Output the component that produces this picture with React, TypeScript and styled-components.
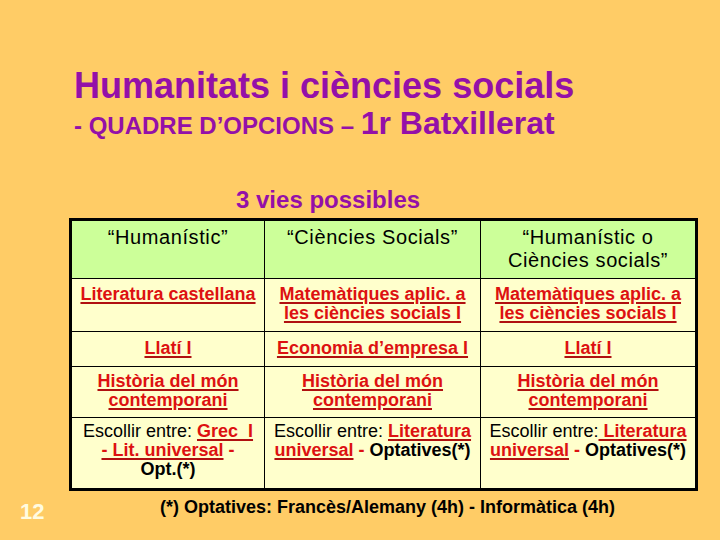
import React from "react";
import styled, { createGlobalStyle } from "styled-components";

const Global = createGlobalStyle`
  html, body { margin: 0; padding: 0; }
  body { background: #ffcc66; font-family: "Liberation Sans", Arial, sans-serif; }
`;

const Page = styled.div`
  width: 720px;
  height: 540px;
  background: #ffcc66;
  display: flex;
  flex-direction: column;
  box-sizing: border-box;
  padding-top: 66px;
  overflow: hidden;
`;

const TitleBlock = styled.div`
  padding-left: 74px;
  color: #9410a8;
  font-weight: bold;
`;

const Title = styled.div`
  font-size: 36px;
  line-height: 40px;
`;

const Subtitle = styled.div`
  line-height: 34px;
`;

const Small = styled.span`
  font-size: 24px;
`;

const Big = styled.span`
  font-size: 32px;
`;

const Ways = styled.div`
  color: #9410a8;
  font-weight: bold;
  font-size: 24px;
  line-height: 28px;
  padding-left: 236px;
  margin-top: 40px;
`;

const Table = styled.table`
  margin-left: 69px;
  margin-top: 4px;
  width: 626px;
  border-collapse: collapse;
  border: 3px solid #000;
  table-layout: fixed;
`;

const Head = styled.td`
  background: #ccff99;
  border: 1px solid #000;
  font-size: 20px;
  letter-spacing: 0.6px;
  line-height: 23px;
  text-align: center;
  vertical-align: top;
  height: 59px;
  padding: 5px 2px 0;
  box-sizing: border-box;
  color: #000;
`;

const Cell = styled.td<{ $h: number; $pt?: number }>`
  background: #ffffcc;
  border: 1px solid #000;
  font-size: 18px;
  line-height: 19px;
  text-align: center;
  vertical-align: top;
  height: ${(p) => p.$h}px;
  padding: ${(p) => p.$pt ?? 6}px 2px 0;
  box-sizing: border-box;
  color: #000;
`;

const Subject = styled.span`
  color: #dd1111;
  font-weight: bold;
  text-decoration: underline;
  text-decoration-thickness: 2px;
  text-underline-offset: 2px;
  text-decoration-color: #b01010;
`;

const Plain = styled.span`
  font-weight: normal;
`;

const Bold = styled.span`
  font-weight: bold;
`;

const Dash = styled.span`
  color: #dd1111;
  font-weight: bold;
`;

const Footer = styled.div`
  display: flex;
  align-items: flex-start;
`;

const PageNum = styled.div`
  width: 40px;
  padding-left: 20px;
  padding-top: 8px;
  font-size: 22px;
  line-height: 26px;
  font-weight: bold;
  color: #fffbe0;
`;

const Note = styled.div`
  padding-left: 100px;
  padding-top: 5px;
  font-size: 18px;
  font-weight: bold;
  color: #000;
  line-height: 22px;
`;

export default function App() {
  return (
    <>
      <Global />
      <Page>
        <TitleBlock>
          <Title>Humanitats i ciències socials</Title>
          <Subtitle>
            <Small>- QUADRE D’OPCIONS – </Small>
            <Big>1r Batxillerat</Big>
          </Subtitle>
        </TitleBlock>
        <Ways>3 vies possibles</Ways>
        <Table>
          <colgroup>
            <col style={{ width: 194 }} />
            <col style={{ width: 216 }} />
            <col style={{ width: 216 }} />
          </colgroup>
          <tbody>
            <tr>
              <Head>“Humanístic”</Head>
              <Head>“Ciències Socials”</Head>
              <Head>
                “Humanístic o<br />Ciències socials”
              </Head>
            </tr>
            <tr>
              <Cell $h={53}>
                <Subject>Literatura castellana</Subject>
              </Cell>
              <Cell $h={53}>
                <Subject>
                  Matemàtiques aplic. a<br />les ciències socials I
                </Subject>
              </Cell>
              <Cell $h={53}>
                <Subject>
                  Matemàtiques aplic. a<br />les ciències socials I
                </Subject>
              </Cell>
            </tr>
            <tr>
              <Cell $h={35} $pt={7}>
                <Subject>Llatí I</Subject>
              </Cell>
              <Cell $h={35} $pt={7}>
                <Subject>Economia d’empresa I</Subject>
              </Cell>
              <Cell $h={35} $pt={7}>
                <Subject>Llatí I</Subject>
              </Cell>
            </tr>
            <tr>
              <Cell $h={51} $pt={5}>
                <Subject>
                  Història del món
                  <br />
                  contemporani
                </Subject>
              </Cell>
              <Cell $h={51} $pt={5}>
                <Subject>
                  Història del món
                  <br />
                  contemporani
                </Subject>
              </Cell>
              <Cell $h={51} $pt={5}>
                <Subject>
                  Història del món
                  <br />
                  contemporani
                </Subject>
              </Cell>
            </tr>
            <tr>
              <Cell $h={72} $pt={4}>
                <Plain>Escollir entre: </Plain>
                <Subject>Grec&nbsp; I</Subject>
                <br />
                <Subject> - Lit. universal</Subject>
                <Dash> -</Dash>
                <br />
                <Bold>Opt.(*)</Bold>
              </Cell>
              <Cell $h={72} $pt={4}>
                <Plain>Escollir entre: </Plain>
                <Subject>Literatura</Subject>
                <br />
                <Subject>universal</Subject>
                <Dash> - </Dash>
                <Bold>Optatives(*)</Bold>
              </Cell>
              <Cell $h={72} $pt={4}>
                <Plain>Escollir entre:</Plain>
                <Subject> Literatura</Subject>
                <br />
                <Subject>universal</Subject>
                <Dash> - </Dash>
                <Bold>Optatives(*)</Bold>
              </Cell>
            </tr>
          </tbody>
        </Table>
        <Footer>
          <PageNum>12</PageNum>
          <Note>(*) Optatives: Francès/Alemany (4h) - Informàtica (4h)</Note>
        </Footer>
      </Page>
    </>
  );
}
